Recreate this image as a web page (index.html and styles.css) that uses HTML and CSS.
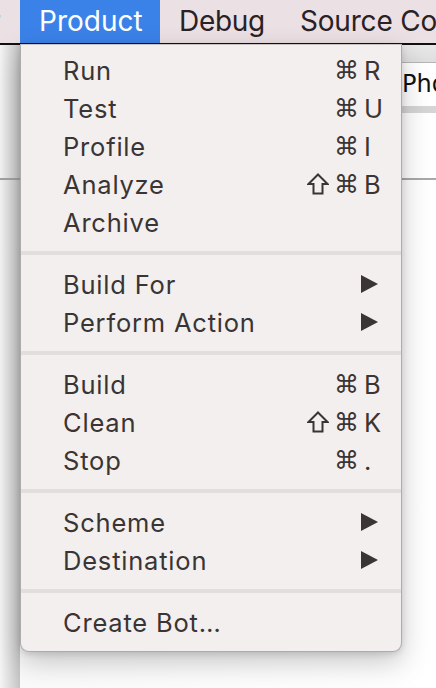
FILE: index.html
```html
<!DOCTYPE html>
<html>
<head>
<meta charset="utf-8">
<link rel="stylesheet" href="styles.css">
</head>
<body>
<div class="menubar">
  <div class="mb-item mb-edge">r</div>
  <div class="mb-item mb-active">Product</div>
  <div class="mb-item mb-debug">Debug</div>
  <div class="mb-item mb-source">Source Control</div>
</div>
<div class="window">
  <div class="strip"></div>
  <div class="main">
    <div class="tb-top"></div>
    <div class="tb-row"><div class="field">Phone</div></div>
    <div class="tb-bottom"></div>
    <div class="pane"></div>
    <div class="divider"></div>
    <div class="pane pane-rest"></div>
  </div>
</div>
<div class="menu">
  <div class="item"><span class="label">Run</span><span class="sc"><span class="mods">⌘</span><span class="key">R</span></span></div>
  <div class="item"><span class="label">Test</span><span class="sc"><span class="mods">⌘</span><span class="key">U</span></span></div>
  <div class="item"><span class="label">Profile</span><span class="sc"><span class="mods">⌘</span><span class="key">I</span></span></div>
  <div class="item"><span class="label">Analyze</span><span class="sc"><svg class="shift" viewBox="0 0 22 22"><path d="M11 1.5 L20.5 11 L15.5 11 L15.5 20.5 L6.5 20.5 L6.5 11 L1.5 11 Z"/></svg><span class="mods">⌘</span><span class="key">B</span></span></div>
  <div class="item"><span class="label">Archive</span></div>
  <div class="sep"></div>
  <div class="item"><span class="label">Build For</span><svg class="arrow" viewBox="0 0 17 18"><path d="M0 0 L17 9 L0 18 Z"/></svg></div>
  <div class="item"><span class="label">Perform Action</span><svg class="arrow" viewBox="0 0 17 18"><path d="M0 0 L17 9 L0 18 Z"/></svg></div>
  <div class="sep"></div>
  <div class="item"><span class="label">Build</span><span class="sc"><span class="mods">⌘</span><span class="key">B</span></span></div>
  <div class="item"><span class="label">Clean</span><span class="sc"><svg class="shift" viewBox="0 0 22 22"><path d="M11 1.5 L20.5 11 L15.5 11 L15.5 20.5 L6.5 20.5 L6.5 11 L1.5 11 Z"/></svg><span class="mods">⌘</span><span class="key">K</span></span></div>
  <div class="item"><span class="label">Stop</span><span class="sc"><span class="mods">⌘</span><span class="key">.</span></span></div>
  <div class="sep"></div>
  <div class="item"><span class="label">Scheme</span><svg class="arrow" viewBox="0 0 17 18"><path d="M0 0 L17 9 L0 18 Z"/></svg></div>
  <div class="item"><span class="label">Destination</span><svg class="arrow" viewBox="0 0 17 18"><path d="M0 0 L17 9 L0 18 Z"/></svg></div>
  <div class="sep"></div>
  <div class="item"><span class="label">Create Bot…</span></div>
</div>
</body>
</html>
```
FILE: styles.css
```css
html, body {
  margin: 0;
  padding: 0;
}
body {
  width: 436px;
  height: 688px;
  overflow: hidden;
  background: #ffffff;
  font-family: Inter, "Liberation Sans", sans-serif;
}
.menubar {
  height: 43px;
  background: #ebe0e3;
  display: flex;
  align-items: center;
  white-space: nowrap;
  overflow: hidden;
  font-size: 28px;
  color: #2a2124;
  border-bottom: 2px solid #111;
}
.mb-item {
  height: 43px;
  line-height: 43px;
  padding: 0 19px;
  flex: none;
}
.mb-edge {
  width: 20px;
  box-sizing: border-box;
  padding: 0;
  text-indent: -10px;
  overflow: hidden;
  color: #4a5a7a;
}
.mb-active {
  width: 140px;
  box-sizing: border-box;
  background: #3b82e8;
  color: #ffffff;
}
.mb-debug {
  width: 121px;
  box-sizing: border-box;
  letter-spacing: -0.3px;
}
.mb-source {
  letter-spacing: -0.2px;
}
.window {
  display: flex;
  height: 643px;
}
.strip {
  width: 20px;
  flex: none;
  background:
    linear-gradient(to bottom, transparent 133px, #a3a3a3 133px, #a3a3a3 135px, transparent 135px),
    linear-gradient(to right, #f5f5f5, #c4c4c4);
}
.main {
  flex: 1;
  display: flex;
  flex-direction: column;
}
.tb-top {
  height: 17px;
  background: linear-gradient(#e8e8e8, #dedede);
}
.tb-row {
  height: 44px;
  box-sizing: border-box;
  border-top: 1px solid #b5b5b5;
  background: #f7f7f7;
}
.field {
  margin-left: 382px;
  height: 43px;
  line-height: 43px;
  background: #ffffff;
  font-size: 24px;
  color: #111;
  white-space: nowrap;
  overflow: hidden;
  font-family: "DejaVu Sans", sans-serif;
}
.tb-bottom {
  height: 7px;
  background: #d5d5d5;
}
.pane {
  height: 65px;
  background: linear-gradient(to right, #fafafa, #ffffff);
}
.divider {
  height: 2px;
  background: #a8a8a8;
}
.pane-rest {
  flex: 1;
}
.menu {
  position: absolute;
  left: 20px;
  top: 44px;
  width: 382px;
  box-sizing: border-box;
  padding: 6px 0 10px;
  background: #f3efee;
  border: 1px solid #b0abab;
  border-top: 1px solid #c8c4c4;
  border-radius: 0 0 9px 9px;
  box-shadow: 0 10px 28px rgba(0, 0, 0, 0.22), 0 2px 6px rgba(0, 0, 0, 0.12);
  color: #3a3434;
  font-size: 25.5px;
  letter-spacing: 0.8px;
}
.item {
  height: 38px;
  display: flex;
  align-items: center;
  padding-left: 42px;
  padding-right: 18px;
}
.label {
  flex: 1;
  white-space: nowrap;
}
.sc {
  display: flex;
  align-items: center;
}
.shift {
  width: 22px;
  height: 22px;
  margin-right: 5px;
  fill: none;
  stroke: #3a3434;
  stroke-width: 2;
  stroke-linejoin: miter;
}
.mods {
  font-family: "DejaVu Sans", sans-serif;
  font-size: 25px;
  letter-spacing: 0;
}
.key {
  width: 19px;
  margin-left: 5px;
  letter-spacing: 0;
}
.arrow {
  width: 17px;
  height: 18px;
  margin-right: 5px;
  fill: #3a3434;
}
.sep {
  height: 4px;
  margin: 10px 0;
  background: #e3dede;
}
```
